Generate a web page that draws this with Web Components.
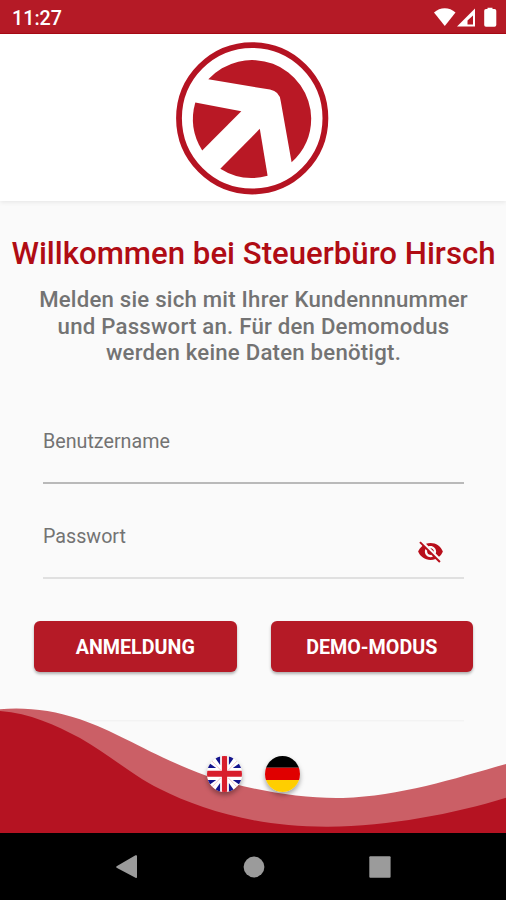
<!DOCTYPE html>
<html lang="de">
<head>
<meta charset="utf-8">
<title>Steuerbüro Hirsch</title>
<style>
  body {
    margin: 0;
    font-family: Roboto, "Liberation Sans", sans-serif;
    background: #fafafa;
  }
</style>
</head>
<body>
<login-page></login-page>

<script>
class StatusBar extends HTMLElement {
  constructor() {
    super();
    this.attachShadow({ mode: "open" });
    this.shadowRoot.innerHTML = `
      <style>
        :host {
          display: flex;
          box-sizing: border-box;
          height: 34px;
          padding: 0 9px 0 12px;
          align-items: center;
          justify-content: space-between;
          background: #b51a26;
          border-bottom: 1px solid #ab0a14;
          color: #fff;
          font-size: 19.700px;
          font-weight: 500;
        }
        span { padding-top: 4px; }
        svg { display: block; }
      </style>
      <span><slot></slot></span>
      <svg width="63" height="34" viewBox="434 0 63 34" fill="#fff">
        <path d="M434 12.500C440 6.700 449.500 6.700 455.500 12.500L444.800 26Z"/>
        <path fill-rule="evenodd" d="M475 8.500V26.500H457ZM473 15.500L467.500 20.500V24.500H473Z"/>
        <path d="M487.500 9V7.800H492.500V9H494.500Q496.300 9 496.300 10.800V25Q496.300 26.700 494.500 26.700H486Q484.200 26.700 484.200 25V10.800Q484.200 9 486 9Z"/>
      </svg>
    `;
  }
}
customElements.define("status-bar", StatusBar);

class BrandHeader extends HTMLElement {
  constructor() {
    super();
    this.attachShadow({ mode: "open" });
    this.shadowRoot.innerHTML = `
      <style>
        :host {
          display: flex;
          height: 167px;
          justify-content: center;
          background: #fff;
          box-shadow: 0 1px 5px rgba(0, 0, 0, 0.09);
        }
        svg { display: block; margin: 0 1px 0 0; }
      </style>
      <svg width="175" height="167" viewBox="0 0 175 167" fill="#b91825">
        <circle cx="87.200" cy="84.300" r="73.200" fill="none" stroke="#b51322" stroke-width="5.800"/>
        <path d="M43.300 45.300L105 55.600Q114.500 57.400 115.700 67L126.600 128.300A59.200 59.200 0 0 0 146.200 84.300A59.200 59.200 0 0 0 43.300 45.300Z"/>
        <path d="M30.300 68.600L76.300 77.200L37.200 116.500A59.200 59.200 0 0 1 30.300 68.600Z"/>
        <path d="M94.800 94.800L102.600 141.800A59.200 59.200 0 0 1 55.300 134.800Z"/>
      </svg>
    `;
  }
}
customElements.define("brand-header", BrandHeader);

class TextField extends HTMLElement {
  constructor() {
    super();
    this.attachShadow({ mode: "open" });
    this.shadowRoot.innerHTML = `
      <style>
        :host {
          display: flex;
          box-sizing: border-box;
          height: 64px;
          justify-content: space-between;
          border-bottom: 2px solid var(--line, #b9b9b9);
          color: #737373;
          font-size: 19.700px;
          line-height: 24px;
        }
        label { padding-top: 10px; }
        ::slotted(*) { margin: 23px 20px 0 0; }
      </style>
      <label></label>
      <slot></slot>
    `;
    this._labelEl = this.shadowRoot.querySelector("label");
  }
  connectedCallback() {
    this._labelEl.textContent = this.getAttribute("label");
  }
}
customElements.define("text-field", TextField);

class EyeOff extends HTMLElement {
  constructor() {
    super();
    this.attachShadow({ mode: "open" });
    this.shadowRoot.innerHTML = `
      <style>
        :host { display: block; width: 27px; height: 27px; }
        svg { display: block; }
      </style>
      <svg width="27" height="27" viewBox="0 0 24 24" fill="#b80f1b">
        <path d="M12 7c2.760 0 5 2.240 5 5 0 .65-.13 1.260-.36 1.830l2.920 2.920c1.510-1.260 2.700-2.890 3.430-4.750-1.730-4.390-6-7.500-11-7.500-1.400 0-2.740.25-3.980.7l2.160 2.160C10.740 7.130 11.350 7 12 7zM2 4.270l2.280 2.280.46.46C3.080 8.300 1.780 10.020 1 12c1.730 4.390 6 7.500 11 7.500 1.550 0 3.030-.3 4.380-.84l.42.42L19.730 22 21 20.730 3.270 3 2 4.270zM7.530 9.800l1.550 1.550c-.05.21-.08.43-.08.65 0 1.660 1.340 3 3 3 .22 0 .44-.03.65-.08l1.550 1.550c-.67.33-1.410.53-2.200.53-2.760 0-5-2.240-5-5 0-.79.2-1.530.53-2.200zm4.310-.78l3.150 3.150.02-.16c0-1.660-1.340-3-3-3l-.17.01z"/>
      </svg>
    `;
  }
}
customElements.define("eye-off", EyeOff);

class ActionButton extends HTMLElement {
  constructor() {
    super();
    this.attachShadow({ mode: "open" });
    this.shadowRoot.innerHTML = `
      <style>
        :host { display: block; flex: 1; }
        button {
          display: block;
          width: 100%;
          height: 50.500px;
          padding: 2px 0 0;
          border: 0;
          border-radius: 6px;
          background: #b51a26;
          box-shadow: 0 2px 3px rgba(0, 0, 0, 0.3);
          color: #fff;
          font: 700 19.700px Roboto, "Liberation Sans", sans-serif;
        }
      </style>
      <button type="button"><slot></slot></button>
    `;
  }
}
customElements.define("action-button", ActionButton);

class FlagIcon extends HTMLElement {
  constructor() {
    super();
    this.attachShadow({ mode: "open" });
  }
  connectedCallback() {
    const flags = {
      en: `
        <path fill="#fff" d="M0 0H36V36H0Z"/>
        <path fill="#14148c" d="M13.500 0V9L7 0ZM22.500 0V9L29 0ZM13.500 36V27L7 36ZM22.500 36V27L29 36ZM0 5.500L9.500 12H0ZM36 5.500L26.500 12H36ZM0 30.500L9.500 24H0ZM36 30.500L26.500 24H36Z"/>
        <path stroke="#f2c6ca" stroke-width="1" d="M5 5L14 14M31 5L22 14M5 31L14 22M31 31L22 22"/>
        <path fill="#d81e2c" d="M15.300 0H20.700V14.800H36V20.700H20.700V36H15.300V20.700H0V14.800H15.300Z"/>`,
      de: `
        <path d="M0 0H36V11.700H0Z"/>
        <path fill="#e00000" d="M0 11.700H36V24H0Z"/>
        <path fill="#ffce00" d="M0 24H36V36H0Z"/>`
    };
    this.shadowRoot.innerHTML = `
      <style>
        :host {
          display: block;
          width: 35px;
          height: 36px;
          overflow: hidden;
          border-radius: 50%;
          box-shadow: 0 3px 5px rgba(0, 0, 0, 0.35);
        }
        svg { display: block; }
      </style>
      <svg width="35" height="36" viewBox="0 0 36 36" preserveAspectRatio="none">${flags[this.getAttribute("lang-code")]}</svg>
    `;
  }
}
customElements.define("flag-icon", FlagIcon);

class WaveFooter extends HTMLElement {
  constructor() {
    super();
    this.attachShadow({ mode: "open" });
    this.shadowRoot.innerHTML = `
      <style>
        :host { display: grid; height: 133px; }
        svg, .languages { grid-area: 1 / 1; }
        svg { display: block; }
        .languages {
          display: flex;
          justify-content: center;
          gap: 23px;
          padding: 56px 0 0 1px;
          z-index: 1;
        }
      </style>
      <svg width="506" height="133" viewBox="0 700 506 133">
        <path fill="#f3f3f3" d="M43 720H464V721.500H43Z"/>
        <path fill="#cb5f66" d="M0 709.300C25 707 52 710 80 719.300C120 733 148 754 207 776C250 790 300 799 343 798C400 796 453 779 506 764V833H0Z"/>
        <path fill="#b51322" d="M0 711C30 713 55 725 80 738C110 755 130 774 160 789C200 809 255 827 328 826.700C390 826 453 814 506 797.700V833H0Z"/>
      </svg>
      <div class="languages"><slot></slot></div>
    `;
  }
}
customElements.define("wave-footer", WaveFooter);

class NavBar extends HTMLElement {
  constructor() {
    super();
    this.attachShadow({ mode: "open" });
    this.shadowRoot.innerHTML = `
      <style>
        :host {
          display: flex;
          box-sizing: border-box;
          height: 67px;
          padding-left: 1px;
          align-items: center;
          justify-content: center;
          gap: 104.500px;
          background: #000;
        }
        svg { display: block; }
      </style>
      <svg width="22" height="24" viewBox="0 0 22 24"><path fill="#9b9b9b" d="M.6 11.200L19.500 .3Q21 -.2 21 1V22Q21 23.500 19.500 22.700L.6 12.700Q-.3 12 .6 11.200Z"/></svg>
      <svg width="22" height="22" viewBox="0 0 22 22"><circle cx="11" cy="11" r="10.400" fill="#9b9b9b"/></svg>
      <svg width="22" height="22" viewBox="0 0 22 22"><rect x=".3" y=".3" width="21.300" height="21.500" rx="1" fill="#9b9b9b"/></svg>
    `;
  }
}
customElements.define("nav-bar", NavBar);

class LoginPage extends HTMLElement {
  constructor() {
    super();
    this.attachShadow({ mode: "open" });
    this.shadowRoot.innerHTML = `
      <style>
        :host {
          display: flex;
          flex-direction: column;
          width: 506px;
          height: 900px;
          overflow: hidden;
        }
        main {
          display: flex;
          flex-direction: column;
          flex: 1;
        }
        h1 {
          margin: 34px 0 0;
          padding-left: 1px;
          text-align: center;
          white-space: nowrap;
          color: #b00c14;
          font-size: 31.200px;
          font-weight: 500;
          line-height: 38px;
        }
        p {
          margin: 13px 0 0;
          padding-left: 1px;
          text-align: center;
          color: #737373;
          font-size: 22.200px;
          font-weight: 500;
          line-height: 26.700px;
          letter-spacing: 0.220px;
        }
        form {
          display: flex;
          flex-direction: column;
          gap: 31px;
          margin: 54px 42px 0 43px;
        }
        .actions {
          display: flex;
          gap: 34px;
          margin: 42px 33px 0 34px;
        }
      </style>
      <status-bar>11:27</status-bar>
      <brand-header></brand-header>
      <main>
        <h1>Willkommen bei Steuerbüro Hirsch</h1>
        <p>Melden sie sich mit Ihrer Kundennnummer<br>und Passwort an. Für den Demomodus<br>werden keine Daten benötigt.</p>
        <form>
          <text-field label="Benutzername"></text-field>
          <text-field label="Passwort" style="--line: #e0e0e0"><eye-off></eye-off></text-field>
        </form>
        <div class="actions">
          <action-button>ANMELDUNG</action-button>
          <action-button>DEMO-MODUS</action-button>
        </div>
      </main>
      <wave-footer>
        <flag-icon lang-code="en"></flag-icon>
        <flag-icon lang-code="de"></flag-icon>
      </wave-footer>
      <nav-bar></nav-bar>
    `;
  }
}
customElements.define("login-page", LoginPage);
</script>
</body>
</html>
